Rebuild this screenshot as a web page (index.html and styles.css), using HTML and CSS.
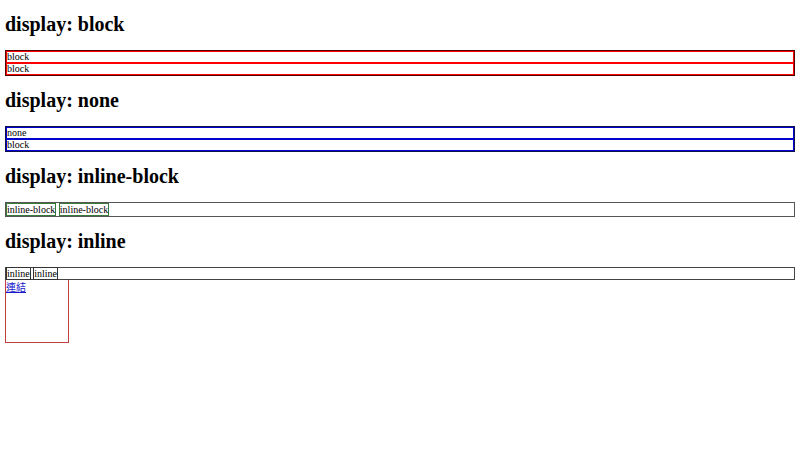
FILE: index.html
```html
<!DOCTYPE html>
<html lang="zh-Hant">
<head>
  <meta charset="UTF-8" />
  <title>display</title>
  <link rel="stylesheet" href="styles.css">
</head>
<body>

  <h1>display: block</h1>
  <div class="box box-block">
    <div class="item">block</div>
    <div class="item">block</div>
  </div>

  <h1>display: none</h1>
  <div class="box box-none">
    <div class="item">none</div>
    <div class="item">block</div>
  </div>

  <h1>display: inline-block</h1>
  <div class="box box-inline-block">
    <div class="item">inline-block</div>
    <div class="item">inline-block</div>
  </div>

  <h1>display: inline</h1>
  <div class="box box-inline">
    <span class="item">inline</span>
    <span class="item">inline</span>
  </div>
  <a class="link-box" href="#">連結</a>

</body>
</html>
```

FILE: styles.css
```css
body {
  margin: 0 5px 5px;
  font-family: "Liberation Serif", "Noto Sans CJK TC", serif;
  font-size: 10px;
  color: #000;
  background: #fff;
}

h1 {
  font-size: 20px;
  font-weight: bold;
  line-height: 23px;
  margin: 13px 0 14px;
}

.box {
  border: 1px solid #000;
  line-height: 11px;
}

/* block */
.box-block {
  border-color: #500;
  line-height: 10px;
}
.box-block .item {
  border: 1px solid #f00;
}

/* none */
.box-none {
  border-color: #101050;
  line-height: 10px;
}
.box-none .item {
  border: 1px solid #00c;
}

/* inline-block */
.box-inline-block {
  border-color: #555;
}
.box-inline-block .item {
  display: inline-block;
  border: 1px solid #3a7a3a;
}

/* inline */
.box-inline {
  border-color: #444;
}
.box-inline .item {
  border: 1px solid #333;
}

.link-box {
  display: block;
  width: 62px;
  height: 62px;
  border: 1px solid #c04040;
  border-top: 0;
  color: #1a1acc;
  font-size: 10px;
  line-height: 16px;
}
```
